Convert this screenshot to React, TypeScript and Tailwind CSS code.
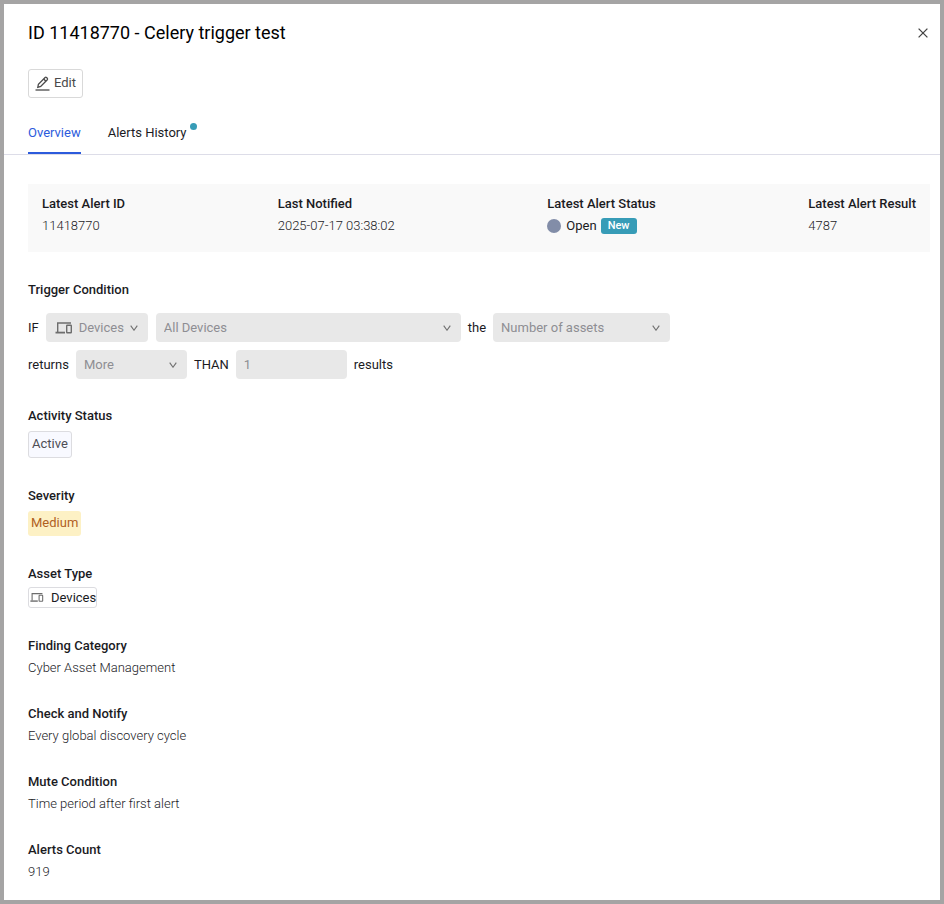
import React from "react";

function DevicesIcon({ className }: { className: string }) {
  return (
    <svg viewBox="0 0 18 14" fill="none" stroke="currentColor" strokeWidth="1.4" className={className} aria-hidden="true">
      <path d="M16 2H2.7V11" />
      <path d="M0.5 11.6H10" strokeWidth="1.8" />
      <rect x="11.7" y="4.2" width="4.6" height="7.6" rx="0.5" />
    </svg>
  );
}

function Chevron() {
  return (
    <svg
      viewBox="0 0 8 6"
      fill="none"
      stroke="currentColor"
      strokeWidth="1.1"
      className="pointer-events-none absolute top-1/2 right-[10px] h-[6px] w-2 -translate-y-1/2 text-[#707070]"
      aria-hidden="true"
    >
      <path d="M0.7 0.6L4 5.2L7.3 0.6" />
    </svg>
  );
}

type PickerProps = {
  label: string;
  value: string;
  width: string;
  icon?: React.ReactNode;
};

function Picker({ label, value, width, icon }: PickerProps) {
  return (
    <span className={`relative flex h-[29px] items-center rounded bg-[#e8e8e8] text-[#8e8e93] ${width}`}>
      {icon}
      <select
        aria-label={label}
        disabled
        className={`h-full w-full appearance-none rounded bg-transparent pr-6 ${icon ? "pl-[33px]" : "pl-2"}`}
      >
        <option>{value}</option>
      </select>
      <Chevron />
    </span>
  );
}

function Fact({ label, children }: { label: string; children: React.ReactNode }) {
  return (
    <div className="flex flex-col items-start gap-[2px]">
      <dt className="font-medium">{label}</dt>
      <dd className="font-light">{children}</dd>
    </div>
  );
}

export default function App() {
  return (
    <main className="min-h-screen border-4 border-[#a5a4a4] bg-white font-['Roboto',sans-serif] text-[13px] leading-5 text-[#1b1b1f]">
      <header className="flex items-center justify-between pt-4 pr-[11px] pl-6">
        <h1 className="text-lg leading-[26px] text-black">ID 11418770 - Celery trigger test</h1>
        <button type="button" aria-label="Close" className="p-px text-[#444]">
          <svg viewBox="0 0 10 10" stroke="currentColor" strokeWidth="1.3" className="h-[10px] w-[10px]" aria-hidden="true">
            <path d="M0.6 0.6L9.4 9.4M9.4 0.6L0.6 9.4" />
          </svg>
        </button>
      </header>

      <div className="px-6 pt-[23px]">
        <button type="button" className="flex h-[29px] items-center gap-1 rounded-[3px] border border-[#d9d9d9] px-[6px] text-[#4a4a4a]">
          <svg viewBox="0 0 15 15" fill="none" stroke="currentColor" strokeWidth="1.3" className="h-[15px] w-[15px]" aria-hidden="true">
            <path d="M2.8 11.3L3.4 8.2L10.1 1.5Q10.8 0.9 11.5 1.5L12.3 2.3Q12.9 3 12.3 3.7L5.7 10.4Z" />
            <path d="M8.7 3L10.9 5.2" />
            <path d="M0.5 14H14.5" />
          </svg>
          <span className="pb-px">Edit</span>
        </button>
      </div>

      <div role="tablist" className="mt-5 flex gap-[27px] border-b border-[#dddde8] pl-6">
        <button type="button" role="tab" aria-selected="true" className="border-b-2 border-[#2c5bdc] pt-[5px] pb-[9px] text-[#2c5bdc]">
          Overview
        </button>
        <button type="button" role="tab" aria-selected="false" className="flex gap-[3px] border-b-2 border-transparent pt-[5px] pb-[9px]">
          Alerts History
          <span className="h-[7px] w-[7px] rounded-full bg-[#379cb7]" />
        </button>
      </div>

      <dl className="mt-[29px] mr-[10px] ml-6 flex h-[68px] justify-between bg-[#f9f9f9] px-[14px] pt-[10px]">
        <Fact label="Latest Alert ID">11418770</Fact>
        <Fact label="Last Notified">2025-07-17 03:38:02</Fact>
        <Fact label="Latest Alert Status">
          <span className="flex items-center font-normal">
            <span className="mr-[5px] h-[14px] w-[14px] rounded-full bg-[#828da8]" />
            Open
            <span className="ml-1 rounded-[3px] bg-[#379cb7] px-[7px] text-[11px] leading-4 font-medium text-white">New</span>
          </span>
        </Fact>
        <Fact label="Latest Alert Result">4787</Fact>
      </dl>

      <section className="px-6 pt-7">
        <h2 className="font-medium">Trigger Condition</h2>
        <div className="mt-[13px] flex flex-wrap items-center gap-x-[7px]">
          <span>IF</span>
          <div className="flex gap-2">
            <Picker
              label="Asset type"
              value="Devices"
              width="w-[102px]"
              icon={<DevicesIcon className="absolute left-[9px] h-[14px] w-[18px] text-[#6d6d6d]" />}
            />
            <Picker label="Query" value="All Devices" width="w-[305px]" />
          </div>
          <span>the</span>
          <Picker label="Measure" value="Number of assets" width="w-[177px]" />
        </div>
        <div className="mt-2 flex flex-wrap items-center gap-x-[7px]">
          <span>returns</span>
          <Picker label="Comparison" value="More" width="w-[111px]" />
          <span>THAN</span>
          <input
            aria-label="Threshold"
            defaultValue="1"
            disabled
            className="h-[29px] w-[111px] rounded bg-[#e8e8e8] px-2 text-[#8e8e93]"
          />
          <span>results</span>
        </div>
      </section>

      <section className="flex flex-col items-start px-6 pt-[27px]">
        <h2 className="font-medium">Activity Status</h2>
        <span className="mt-[5px] rounded-[3px] border border-[#dcdce0] bg-[#f8f9ff] px-[3px] pt-[2px] pb-[3px] text-[#4d4d55]">Active</span>
      </section>

      <section className="flex flex-col items-start px-6 pt-7">
        <h2 className="font-medium">Severity</h2>
        <span className="mt-[5px] rounded-[3px] bg-[#fdf1c5] px-[3px] pt-[2px] pb-[3px] text-[#b0601f]">Medium</span>
      </section>

      <section className="flex flex-col items-start px-6 pt-7">
        <h2 className="font-medium">Asset Type</h2>
        <span className="mt-[3px] flex h-[21px] items-center gap-[7px] rounded-[3px] border border-[#dcdce0] pl-px">
          <DevicesIcon className="h-[11px] w-[14px] text-[#6d6d6d]" />
          Devices
        </span>
      </section>

      <dl className="flex flex-col gap-[26px] px-6 pt-7 pb-4">
        <Fact label="Finding Category">Cyber Asset Management</Fact>
        <Fact label="Check and Notify">Every global discovery cycle</Fact>
        <Fact label="Mute Condition">Time period after first alert</Fact>
        <Fact label="Alerts Count">919</Fact>
      </dl>
    </main>
  );
}
